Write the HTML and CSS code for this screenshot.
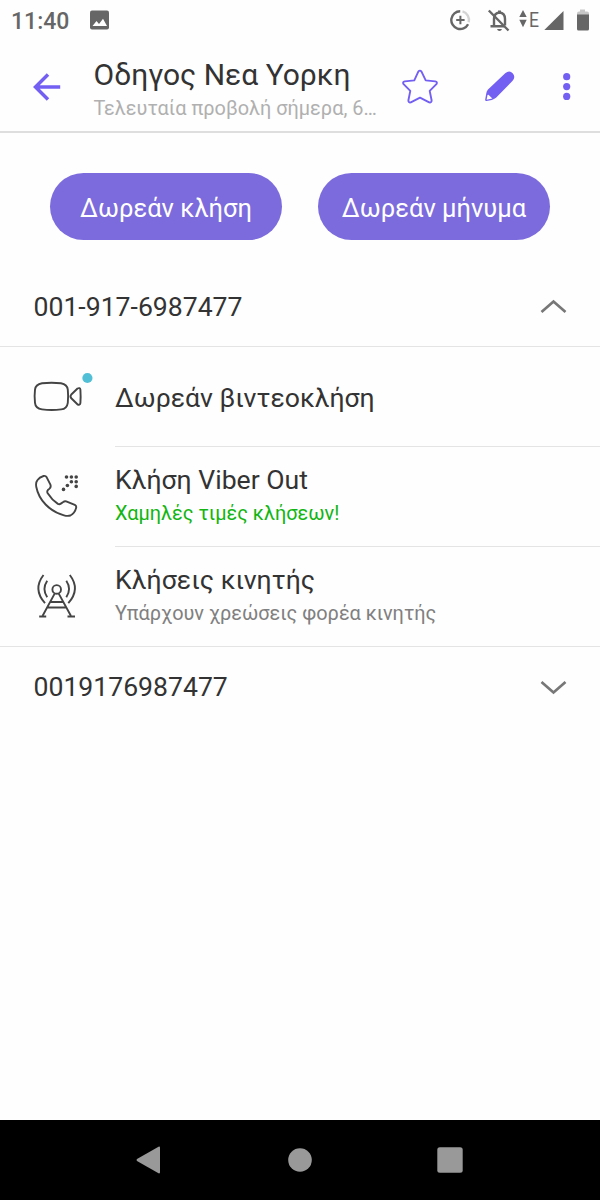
FILE: index.html
```html
<!DOCTYPE html>
<html lang="el">
<head>
<meta charset="utf-8">
<title>Οδηγος Νεα Υορκη</title>
<link rel="stylesheet" href="styles.css">
</head>
<body>
<div class="screen">
  <div class="status">
    <span class="clock">11:40</span>
    <svg class="status-photo" width="20" height="20" viewBox="0 0 20 20"><rect x="0" y="0.500" width="19" height="19" rx="2" fill="#666"/><path d="M2.500 16 6.500 11l2.500 3 4-5.200L17 16z" fill="#fff"/></svg>
    <svg class="status-icons" width="150" height="40" viewBox="450 0 150 40">
      <g fill="none" stroke="#666" stroke-width="2.400">
        <path d="M460.200 11.200a8.900 8.900 0 1 0 7.900 13"/>
        <path d="M462.500 11.400a8.900 8.900 0 0 1 6.200 10.800" stroke="#d4d4d4"/>
        <path d="M456.200 20h8.400M460.400 15.800v8.400" stroke-width="2"/>
        <path d="M494 25.500v-6.500q0-6 5.500-6.500q5.500.5 5.500 6.500v6.500M490.500 26.200h13.500"/>
        <path d="M488.800 10.500 508.500 30.500"/>
      </g>
      <path d="M498 10.500h3v3h-3zM497 29h5q-.6 2-2.500 2t-2.500-2z" fill="#666"/>
      <path d="M523 10 526.700 17h-7.400zM523 27.200 519.300 19.800h7.400z" fill="#666"/>
      <path d="M544.300 30 563.500 11v19z" fill="#666"/>
      <path d="M577 13.500q0-2 2-2h1v-2h5v2h2q2 0 2 2v2h-12z" fill="#c7c7c7"/>
      <path d="M577 14.500h12v14.500q0 1.500-1.500 1.500h-9q-1.500 0-1.500-1.500z" fill="#666"/>
      <text class="network" x="529" y="27" textLength="10" lengthAdjust="spacingAndGlyphs">E</text>
    </svg>
  </div>
  <header class="header">
    <svg class="back" width="30" height="30" viewBox="32 72 30 30"><path d="M48 74.500 35.500 87 48 99.500M35.500 87H60.200" fill="none" stroke="#7360f2" stroke-width="3.500"/></svg>
    <div class="heading">
      <h1 class="name">Οδηγος Νεα Υορκη</h1>
      <p class="seen">Τελευταία προβολή σήμερα, 6…</p>
    </div>
    <svg class="actions" width="200" height="91" viewBox="400 40 200 91">
      <path d="M418.300 71.700q1.600-2.100 3.200 0l4.200 8.700 9.500 1q2.700.5 1.200 2.800l-6.700 6.700 1.900 9.400q.1 2.600-2.400 2.100l-9.200-4.700-9.200 4.700q-2.500.5-2.400-2.100l1.900-9.400-6.700-6.700q-1.500-2.300 1.200-2.800l9.500-1z" fill="none" stroke="#7360f2" stroke-width="1.900" stroke-linejoin="round"/>
      <path d="M488 89.500 505.200 73.200q4.200-3.300 7.700.2 3 3.800-.5 7.600L496 97.800q-2 1.600-4.200 2.100l-5.300 1.200q-1.600.1-1.300-1.500l1.100-6.400q.3-2.200 1.700-3.700z" fill="#7360f2"/>
      <path d="M488.500 94.700 492.300 98.500 486.600 99.800 487.500 95z" fill="#fff"/>
      <g fill="#7360f2"><circle cx="566.700" cy="76.700" r="3.600"/><circle cx="566.700" cy="86.600" r="3.600"/><circle cx="566.700" cy="96.400" r="3.600"/></g>
    </svg>
  </header>
  <div class="buttons">
    <div class="button">Δωρεάν κλήση</div>
    <div class="button">Δωρεάν μήνυμα</div>
  </div>
  <div class="number expanded">
    <span>001-917-6987477</span>
    <svg width="27" height="16" viewBox="0 0 27 16"><path d="M1.500 13 13.500 2.500 25.500 13" fill="none" stroke="#777" stroke-width="2.700"/></svg>
  </div>
  <div class="option">
    <svg class="option-icon" width="115" height="99" viewBox="0 347 115 99">
      <g fill="none" stroke="#444" stroke-width="1.900" stroke-linejoin="round">
        <path d="M42 383.300q9.500-1.200 19 0 6.300 1.200 6.800 6.400.7 6.800 0 13.100-.8 5.900-6.600 6.600-9.500 1.300-19.200 0-6.500-1-7-6.600-.8-6.300 0-13.100.5-5.200 7-6.400z"/>
        <path d="M71.300 394.500 77.500 388.500q2.500-1.200 2.900 1.200.5 6.700 0 13.400-.5 2.500-3 1.200L71.300 398.300q-1.600-1.900 0-3.800z"/>
      </g>
      <circle cx="87.400" cy="378" r="5.100" fill="#51bfd6"/>
    </svg>
    <div class="option-text single"><span class="option-title">Δωρεάν βιντεοκλήση</span></div>
  </div>
  <div class="option">
    <svg class="option-icon" width="115" height="99" viewBox="0 447 115 99">
      <path d="M43.500 476q2.100-.6 3.200 1.300l3.700 7.400q.9 2.200-.9 3.900l-1.600 1.400q-1.200 1.400-.2 3.200 4.200 6.700 10.200 10.700 1.700.8 3-.3l2.300-1.600q1.300-1 3-.6l8.600 3.400q1.900 1 1.300 3.100-1.200 5.300-5.700 7.600-3 .8-6.400-.2c-14.600-3.900-25.200-15.400-27.700-28.300q-.8-4.500 1-6.700 2.300-3.200 6.200-4.300z" fill="none" stroke="#444" stroke-width="1.900" stroke-linejoin="round"/>
      <g fill="#444"><circle cx="66.500" cy="477" r="1.800"/><circle cx="71.400" cy="477" r="1.800"/><circle cx="76.200" cy="477" r="1.800"/><circle cx="71.400" cy="481.700" r="1.800"/><circle cx="76.200" cy="481.700" r="1.800"/><circle cx="67.400" cy="485.500" r="1.800"/><circle cx="76.200" cy="486.400" r="1.800"/><circle cx="63.500" cy="489.400" r="1.800"/></g>
    </svg>
    <div class="option-text"><span class="option-title">Κλήση Viber Out</span><span class="option-note promo">Χαμηλές τιμές κλήσεων!</span></div>
  </div>
  <div class="option last">
    <svg class="option-icon" width="115" height="99" viewBox="0 547 115 99">
      <g fill="none" stroke="#444" stroke-width="1.900">
        <circle cx="56.700" cy="589.400" r="4.300"/>
        <path d="M54.800 593.400 42.500 616M58.600 593.400 71 616M50.500 602h12.500M47.500 607.500h18.500"/>
        <path d="M39.200 616.500h7M67.500 616.500h7.500M47.200 580.800q-5.500 8.200 0 16.500M66.300 580.800q5.500 8.200 0 16.500M43.500 575q-11 14.200 1.500 28.200M69.800 575q11 14.200-1.500 28.200"/>
      </g>
    </svg>
    <div class="option-text"><span class="option-title mobile-title">Κλήσεις κινητής</span><span class="option-note">Υπάρχουν χρεώσεις φορέα κινητής</span></div>
  </div>
  <div class="number">
    <span>0019176987477</span>
    <svg width="27" height="16" viewBox="0 0 27 16"><path d="M1.500 3 13.500 13.500 25.500 3" fill="none" stroke="#777" stroke-width="2.700"/></svg>
  </div>
  <nav class="navbar">
    <svg width="600" height="80" viewBox="0 1120 600 80" fill="#999"><path d="M137 1158.900 158.500 1146.700q1.500-.6 1.500 1v24.600q0 1.600-1.500 1L137 1161.100q-1-1.100 0-2.200z"/><circle cx="300" cy="1160" r="11.800"/><rect x="437.300" y="1147.300" width="25.400" height="25.400" rx="2.500"/></svg>
  </nav>
</div>
</body>
</html>
```

FILE: styles.css
```css
* { box-sizing: border-box; }
body { margin: 0; background: #fefefe; font-family: Roboto, "Noto Sans", sans-serif; color: #333; }
svg { display: block; flex: none; }
.screen { width: 600px; height: 1200px; display: flex; flex-direction: column; overflow: hidden; }
.status { height: 40px; display: flex; align-items: center; padding-left: 11px; }
.clock { width: 79px; font-size: 23px; font-weight: 500; color: #666; line-height: 40px; padding-top: 3px; }
.status-icons { margin-left: auto; }
.network { font-size: 20px; fill: #666; }
.header { height: 93px; display: flex; border-bottom: 2px solid #dedede; padding-left: 32px; }
.back { margin-top: 32px; }
.heading { width: 306px; padding: 16px 0 0 31.5px; white-space: nowrap; }
.name { margin: 0; font-size: 30px; line-height: 38px; font-weight: 400; }
.seen { margin: 0; font-size: 19.9px; line-height: 30px; color: #b0b0b0; }
.actions { margin-left: auto; }
.buttons { display: flex; gap: 36px; padding: 40px 50px 27px; }
.button { flex: 1; height: 67px; border-radius: 34px; background: #7c6bdd; color: #fff; font-size: 25.5px; line-height: 70px; text-align: center; white-space: nowrap; }
.number { height: 80px; display: flex; align-items: center; justify-content: space-between; padding: 0 33px 1px 33.5px; font-size: 26.6px; flex: none; }
.expanded { border-bottom: 1px solid #e4e4e4; padding-bottom: 0; }
.option { height: 100px; display: flex; flex: none; }
.option-text { flex: 1; display: flex; flex-direction: column; justify-content: center; border-bottom: 1px solid #e4e4e4; padding-bottom: 1px; white-space: nowrap; }
.single { padding: 1px 0 0; }
.option-title { font-size: 26.6px; line-height: 35px; }
.mobile-title { letter-spacing: 0.05px; }
.option-note { font-size: 19.9px; line-height: 34px; color: #808080; }
.promo { color: #12b512; }
.last { border-bottom: 1px solid #e4e4e4; }
.last .option-text { border-bottom: 0; padding-bottom: 0; }
.navbar { height: 80px; margin-top: auto; background: #000; flex: none; }
```
